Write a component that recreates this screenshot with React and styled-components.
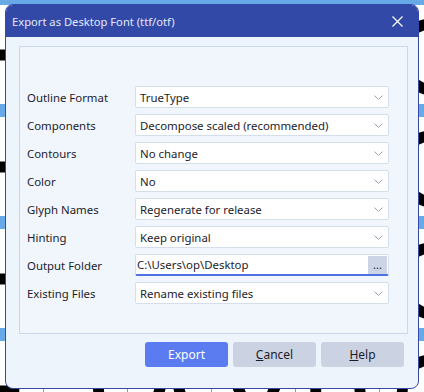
import React from 'react'
import styled, { createGlobalStyle } from 'styled-components'

const GlobalStyle = createGlobalStyle`
  body {
    margin: 0;
    overflow: hidden;
    font-family: "Noto Sans", "Open Sans", sans-serif;
  }
`

const fields = [
  { label: 'Outline Format', value: 'TrueType' },
  { label: 'Components', value: 'Decompose scaled (recommended)' },
  { label: 'Contours', value: 'No change' },
  { label: 'Color', value: 'No' },
  { label: 'Glyph Names', value: 'Regenerate for release' },
  { label: 'Hinting', value: 'Keep original' },
  { label: 'Output Folder', value: 'C:\\Users\\op\\Desktop', folder: true },
  { label: 'Existing Files', value: 'Rename existing files' },
]

// rough glyph drawings shown in the editor cells behind the dialog
const shapes = [
  'M20 20 C60 10 70 80 30 90',
  'M15 15 L15 90 M15 50 L60 50',
  'M60 20 C10 10 10 90 60 85',
  'M20 15 L20 90 C80 90 80 15 20 15',
  'M15 20 L45 90 L75 20',
  'M20 90 L42 15 L64 90',
]

const cells = Array.from({ length: 24 }, (_, i) => shapes[(i * 5 + 1) % shapes.length])

const Chevron = () => (
  <svg width="9" height="5" viewBox="0 0 9 5">
    <path d="M0.5 0.5 L4.5 4.5 L8.5 0.5" fill="none" stroke="#9aa3b4" strokeWidth="1" />
  </svg>
)

const CloseIcon = () => (
  <svg width="11" height="11" viewBox="0 0 11 11">
    <path d="M0.5 0.5 L10.5 10.5 M10.5 0.5 L0.5 10.5" stroke="#ffffff" strokeWidth="1.2" />
  </svg>
)

const App = () => {
  return (
    <Desktop>
      <GlobalStyle />

      {/* font editor glyph grid behind the dialog */}
      <GlyphGrid>
        {cells.map((d, i) => (
          <Cell key={i}>
            <CellHeader />
            <CellGlyph viewBox="0 0 84 99" preserveAspectRatio="none">
              <path d={d} fill="none" stroke="#000" strokeWidth="11" />
            </CellGlyph>
          </Cell>
        ))}
      </GlyphGrid>

      <Dialog>
        <TitleBar>
          <Title>Export as Desktop Font (ttf/otf)</Title>
          <CloseButton><CloseIcon /></CloseButton>
        </TitleBar>

        <Body>
          <Group>
            {fields.map((f) => (
              <Row key={f.label}>
                <Label>{f.label}</Label>
                {f.folder ? (
                  <FolderInput>
                    <FieldText>{f.value}</FieldText>
                    <BrowseButton>...</BrowseButton>
                  </FolderInput>
                ) : (
                  <Combo>
                    <FieldText>{f.value}</FieldText>
                    <Chevron />
                  </Combo>
                )}
              </Row>
            ))}
          </Group>

          <ButtonRow>
            <Button primary>Export</Button>
            <Button><u>C</u>ancel</Button>
            <Button><u>H</u>elp</Button>
          </ButtonRow>
        </Body>
      </Dialog>
    </Desktop>
  )
}

const Desktop = styled.div`
  position: relative;
  width: 424px;
  height: 392px;
  overflow: hidden;
  background: #ffffff;
`

const GlyphGrid = styled.div`
  display: grid;
  grid-template-columns: repeat(6, 84px);
  grid-auto-rows: 112px;
  margin-left: -41px;
  margin-top: -8px;
`

const Cell = styled.div`
  display: flex;
  flex-direction: column;
  border-left: 1px solid #9a9a9a;
  overflow: hidden;
`

const CellHeader = styled.div`
  height: 13px;
  flex-shrink: 0;
  background: #68aae8;
`

const CellGlyph = styled.svg`
  flex: 1;
  width: 100%;
`

const Dialog = styled.div`
  position: absolute;
  left: 5px;
  top: 4px;
  width: 414px;
  height: 385px;
  box-sizing: border-box;
  border: 1px solid #3349a8;
  border-radius: 8px;
  overflow: hidden;
  display: flex;
  flex-direction: column;
  background: #eef4fb;
`

const TitleBar = styled.div`
  height: 32px;
  flex-shrink: 0;
  background: #3349a8;
  display: flex;
  align-items: center;
  justify-content: space-between;
  padding: 0 15px 0 6px;
`

const Title = styled.span`
  color: #e4eafa;
  font-size: 11.2px;
`

const CloseButton = styled.span`
  display: flex;
  align-items: center;
`

const Body = styled.div`
  flex: 1;
  display: flex;
  flex-direction: column;
  padding: 9px 10px 0 13px;
`

const Group = styled.div`
  height: 288px;
  box-sizing: border-box;
  border: 1px solid #c9d8ec;
  background: #f0f6fc;
  padding: 39px 18px 0 7px;
  display: flex;
  flex-direction: column;
  gap: 6px;
`

const Row = styled.div`
  display: flex;
  align-items: center;
  height: 22px;
`

const Label = styled.span`
  width: 108px;
  flex-shrink: 0;
  font-size: 11.4px;
  color: #1c1c2c;
`

const Combo = styled.div`
  flex: 1;
  height: 22px;
  box-sizing: border-box;
  background: #ffffff;
  border: 1px solid #d5dfec;
  border-radius: 2px;
  display: flex;
  align-items: center;
  justify-content: space-between;
  padding: 0 5px 0 4px;
`

const FolderInput = styled(Combo)`
  border-bottom: 2px solid #4f72e3;
  padding: 0 1px 0 1px;
`

const FieldText = styled.span`
  font-size: 11.4px;
  color: #1c1c2c;
  white-space: nowrap;
`

const BrowseButton = styled.span`
  width: 19px;
  height: 18px;
  background: #ccd5e6;
  font-size: 11px;
  color: #1c1c2c;
  display: flex;
  align-items: center;
  justify-content: center;
`

const ButtonRow = styled.div`
  display: flex;
  justify-content: flex-end;
  gap: 5px;
  margin-top: 8px;
  padding-right: 4px;
`

const Button = styled.div`
  width: 83px;
  height: 25px;
  border-radius: 3px;
  background: ${(p) => (p.primary ? '#5b7cf0' : '#cbd3e3')};
  color: ${(p) => (p.primary ? '#ffffff' : '#1c1c2c')};
  font-size: 12px;
  display: flex;
  align-items: center;
  justify-content: center;
`

export default App
